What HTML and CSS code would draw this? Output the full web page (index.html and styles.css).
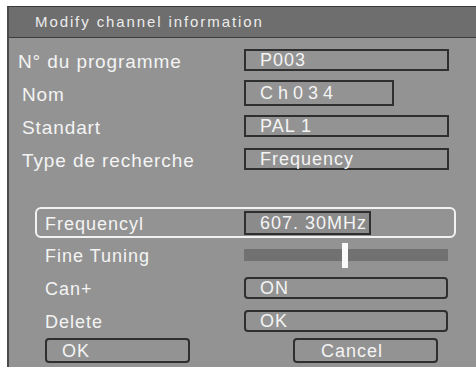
FILE: index.html
```html
<!DOCTYPE html>
<html lang="fr">
<head>
    <meta charset="UTF-8">
    <meta name="viewport" content="width=device-width, initial-scale=1.0">
    <title>Modify channel information</title>
    <link rel="stylesheet" href="styles.css">
</head>
<body>

<div class="panel">
    <div class="title-bar">Modify channel information</div>

    <div class="panel-body">
        <!-- Infos principales -->
        <div class="info-row">
            <span class="label label-first">N° du programme</span>
            <span class="field">P003</span>
        </div>
        <div class="info-row">
            <span class="label">Nom</span>
            <span class="field field-name">Ch034</span>
        </div>
        <div class="info-row">
            <span class="label">Standart</span>
            <span class="field">PAL 1</span>
        </div>
        <div class="info-row">
            <span class="label">Type de recherche</span>
            <span class="field">Frequency</span>
        </div>

        <!-- Réglages -->
        <div class="tune-row selected">
            <span class="label">Frequencyl</span>
            <span class="field field-freq">607. 30MHz</span>
        </div>
        <div class="tune-row">
            <span class="label">Fine Tuning</span>
            <div class="slider">
                <div class="thumb" style="left: 98px"></div>
            </div>
        </div>
        <div class="tune-row">
            <span class="label">Can+</span>
            <span class="field field-round">ON</span>
        </div>
        <div class="tune-row">
            <span class="label">Delete</span>
            <span class="field field-round">OK</span>
        </div>

        <div class="buttons">
            <button class="btn btn-ok">OK</button>
            <button class="btn btn-cancel">Cancel</button>
        </div>
    </div>
</div>

</body>
</html>
```

FILE: styles.css
```css
body {
    margin: 0;
    padding: 0;
    background: #fff;
    font-family: "Liberation Sans", Arial, sans-serif;
    color: #f4f4f4;
    overflow: hidden;
}
.panel {
    margin: 6px 0 0 7px;
    height: 361px;
    background: #939393;
    border-left: 2px solid #4a4a4a;
    border-top: 1px solid #3a3a3a;
}
.title-bar {
    height: 30px;
    line-height: 29px;
    background: #6e6e6e;
    border-bottom: 1px solid #3c3c3c;
    padding-left: 26px;
    font-size: 15px;
    letter-spacing: 1.9px;
    color: #ececec;
}
.panel-body {
    padding-top: 5px;
}
.info-row {
    display: flex;
    align-items: center;
    height: 33px;
    padding-left: 13px;
}
.info-row .label {
    width: 222px;
    padding-top: 5px;
    font-size: 19px;
    letter-spacing: 0.9px;
}
.label-first {
    margin-left: -4px;
    padding-right: 4px;
}
.field {
    box-sizing: border-box;
    width: 205px;
    height: 22px;
    line-height: 18px;
    border: 2px solid #2f2f2f;
    padding-left: 14px;
    font-size: 18px;
    letter-spacing: 1px;
}
.field-name {
    width: 150px;
    height: 26px;
    line-height: 22px;
    letter-spacing: 5px;
}
.field-freq {
    width: 127px;
    height: 24px;
    line-height: 20px;
    background: #8b8b8b;
}
.field-round {
    width: 204px;
    border-radius: 4px;
}
.tune-row {
    display: flex;
    align-items: center;
    height: 33px;
    padding-left: 36px;
}
.tune-row .label {
    width: 199px;
    padding-top: 3px;
    font-size: 18px;
    letter-spacing: 1px;
}
.tune-row.selected {
    box-sizing: border-box;
    width: 421px;
    height: 31px;
    margin: 32px 0 0 26px;
    padding-left: 8px;
    border: 2px solid #f2f2f2;
    border-radius: 6px;
}
.slider {
    position: relative;
    width: 204px;
    height: 12px;
    background: #717171;
}
.thumb {
    position: absolute;
    top: -6px;
    width: 6px;
    height: 25px;
    background: #fafafa;
}
.buttons {
    display: flex;
    padding-left: 36px;
    margin-top: 1px;
}
.btn {
    box-sizing: border-box;
    width: 145px;
    height: 25px;
    background: transparent;
    border: 2px solid #2f2f2f;
    border-radius: 4px;
    color: #f4f4f4;
    font-family: "Liberation Sans", Arial, sans-serif;
    font-size: 18px;
    letter-spacing: 1px;
    text-align: left;
    padding: 0;
    line-height: 20px;
}
.btn-ok {
    padding-left: 15px;
}
.btn-cancel {
    margin-left: 103px;
    padding-left: 26px;
}
```
